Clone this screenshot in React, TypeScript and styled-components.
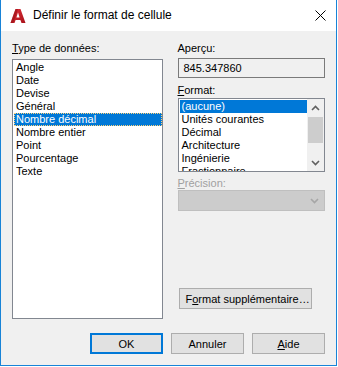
import React from 'react';
import styled, { createGlobalStyle } from 'styled-components';

const GlobalStyle = createGlobalStyle`
  html, body {
    margin: 0;
    padding: 0;
    background: #ffffff;
  }
  body {
    font-family: 'Liberation Sans', Arial, sans-serif;
    font-size: 11px;
    color: #000000;
  }
`;

const accent = '#1883d7';
const select = '#0078d7';

const Window = styled.div`
  box-sizing: border-box;
  width: 337px;
  height: 366px;
  border: 1px solid ${accent};
  border-top: none;
  background: #f0f0f0;
  display: flex;
  flex-direction: column;
`;

const TitleBar = styled.div`
  height: 31px;
  background: #ffffff;
  display: flex;
  align-items: center;
  padding: 0 9px 0 9px;
`;

const Title = styled.span`
  flex: 1;
  margin-left: 7px;
  font-size: 12px;
  color: #000000;
  padding-bottom: 1px;
`;

const CloseButton = styled.div`
  width: 12px;
  height: 12px;
  display: flex;
  align-items: center;
  justify-content: center;
  margin-right: 1px;
`;

const Body = styled.div`
  flex: 1;
  display: flex;
  flex-direction: column;
  padding: 11px 11px 0 11px;
`;

const Columns = styled.div`
  display: flex;
  gap: 15px;
`;

const LeftCol = styled.div`
  width: 151px;
  display: flex;
  flex-direction: column;
`;

const RightCol = styled.div`
  width: 148px;
  display: flex;
  flex-direction: column;
`;

const Label = styled.div<{ $disabled?: boolean; $gap?: number; $top?: number }>`
  height: 13px;
  line-height: 13px;
  margin-top: ${p => p.$top ?? 0}px;
  margin-bottom: ${p => p.$gap ?? 4}px;
  color: ${p => (p.$disabled ? '#a0a0a0' : '#000000')};
  u {
    text-decoration: underline;
    text-underline-offset: 1px;
  }
`;

const ListBox = styled.div<{ $height: number }>`
  box-sizing: border-box;
  height: ${p => p.$height}px;
  background: #ffffff;
  border: 1px solid #828790;
  display: flex;
  overflow: hidden;
`;

const Items = styled.div`
  flex: 1;
  padding: 1px 0 0 1px;
  overflow: hidden;
`;

const Item = styled.div<{ $selected?: boolean; $focus?: boolean }>`
  box-sizing: border-box;
  height: 13px;
  line-height: 13px;
  padding-left: 2px;
  white-space: nowrap;
  background: ${p => (p.$selected ? select : 'transparent')};
  color: ${p => (p.$selected ? '#ffffff' : '#000000')};
  outline: ${p => (p.$focus ? '1px dotted #ffd27a' : 'none')};
  outline-offset: -1px;
`;

const ScrollBar = styled.div`
  width: 17px;
  background: #f0f0f0;
  display: flex;
  flex-direction: column;
`;

const ScrollArrow = styled.div`
  height: 17px;
  display: flex;
  align-items: center;
  justify-content: center;
`;

const ScrollTrack = styled.div`
  flex: 1;
  display: flex;
  flex-direction: column;
  padding: 1px 1px 0 1px;
`;

const Thumb = styled.div`
  height: 26px;
  background: #cdcdcd;
`;

const ReadOnlyBox = styled.div`
  box-sizing: border-box;
  height: 20px;
  border: 1px solid #7a7a7a;
  background: #f0f0f0;
  line-height: 18px;
  padding-left: 5px;
  margin-bottom: 6px;
`;

const Combo = styled.div`
  box-sizing: border-box;
  height: 21px;
  border: 1px solid #bfbfbf;
  background: #cccccc;
  display: flex;
  align-items: center;
  justify-content: flex-end;
  padding-right: 5px;
`;

const Button = styled.button<{ $default?: boolean; $width?: number }>`
  box-sizing: border-box;
  width: ${p => p.$width ?? 74}px;
  height: 21px;
  padding: 0;
  font-family: inherit;
  font-size: 11px;
  color: #000000;
  background: #e1e1e1;
  border: ${p => (p.$default ? `2px solid ${select}` : '1px solid #adadad')};
  u {
    text-underline-offset: 1px;
  }
`;

const ExtraButton = styled(Button)`
  align-self: flex-start;
  margin-top: 77px;
  margin-left: 1px;
  text-align: left;
  padding-left: 6px;
`;

const Footer = styled.div`
  display: flex;
  justify-content: flex-end;
  gap: 8px;
  margin-top: 14px;
`;

const Chevron = ({ up, color = '#606060' }: { up?: boolean; color?: string }) => (
  <svg width="9" height="6" viewBox="0 0 9 6">
    <polyline
      points={up ? '1,5 4.5,1.5 8,5' : '1,1 4.5,4.5 8,1'}
      fill="none"
      stroke={color}
      strokeWidth="1.6"
    />
  </svg>
);

const Logo = () => (
  <svg width="16" height="16" viewBox="0 0 16 16">
    <defs>
      <linearGradient id="lg" x1="0" y1="0" x2="1" y2="1">
        <stop offset="0" stopColor="#e2313a" />
        <stop offset="1" stopColor="#a8121a" />
      </linearGradient>
    </defs>
    <polygon points="5.5,1 10.5,1 15.5,15 11.5,15 10.4,12 5.6,12 4.5,15 0.5,15" fill="url(#lg)" />
    <polygon points="8,4.5 9.6,9.4 6.4,9.4" fill="#ffffff" />
    <polygon points="5.5,1 8,1 3.2,15 0.5,15" fill="#8f0e14" opacity="0.55" />
  </svg>
);

const dataTypes = [
  'Angle',
  'Date',
  'Devise',
  'Général',
  'Nombre décimal',
  'Nombre entier',
  'Point',
  'Pourcentage',
  'Texte',
];

// the last entry is only half visible above the list's bottom edge
const formats = [
  '(aucune)',
  'Unités courantes',
  'Décimal',
  'Architecture',
  'Ingénierie',
  'Fractionnaire',
];

export default function App() {
  return (
    <>
      <GlobalStyle />
      <Window>
        <TitleBar>
          <Logo />
          <Title>Définir le format de cellule</Title>
          <CloseButton>
            <svg width="11" height="11" viewBox="0 0 11 11">
              <path d="M0.5,0.5 L10.5,10.5 M10.5,0.5 L0.5,10.5" stroke="#000" strokeWidth="1" />
            </svg>
          </CloseButton>
        </TitleBar>
        <Body>
          <Columns>
            <LeftCol>
              <Label>
                <u>T</u>ype de données:
              </Label>
              <ListBox $height={260}>
                <Items>
                  {dataTypes.map(t => (
                    <Item key={t} $selected={t === 'Nombre décimal'} $focus={t === 'Nombre décimal'}>
                      {t}
                    </Item>
                  ))}
                </Items>
              </ListBox>
            </LeftCol>
            <RightCol>
              <Label $gap={3}>Aperçu:</Label>
              <ReadOnlyBox>845.347860</ReadOnlyBox>
              <Label $gap={1}>
                <u>F</u>ormat:
              </Label>
              <ListBox $height={74}>
                <Items>
                  {formats.map(f => (
                    <Item key={f} $selected={f === '(aucune)'}>
                      {f}
                    </Item>
                  ))}
                </Items>
                <ScrollBar>
                  <ScrollArrow>
                    <Chevron up />
                  </ScrollArrow>
                  <ScrollTrack>
                    <Thumb />
                  </ScrollTrack>
                  <ScrollArrow>
                    <Chevron />
                  </ScrollArrow>
                </ScrollBar>
              </ListBox>
              <Label $disabled $gap={0} $top={5}>
                <u>P</u>récision:
              </Label>
              <Combo>
                <Chevron color="#a6a6a6" />
              </Combo>
              <ExtraButton $width={133}>
                F<u>o</u>rmat supplémentaire…
              </ExtraButton>
            </RightCol>
          </Columns>
          <Footer>
            <Button $default $width={73}>OK</Button>
            <Button $width={73}>Annuler</Button>
            <Button $width={73}>
              <u>A</u>ide
            </Button>
          </Footer>
        </Body>
      </Window>
    </>
  );
}
